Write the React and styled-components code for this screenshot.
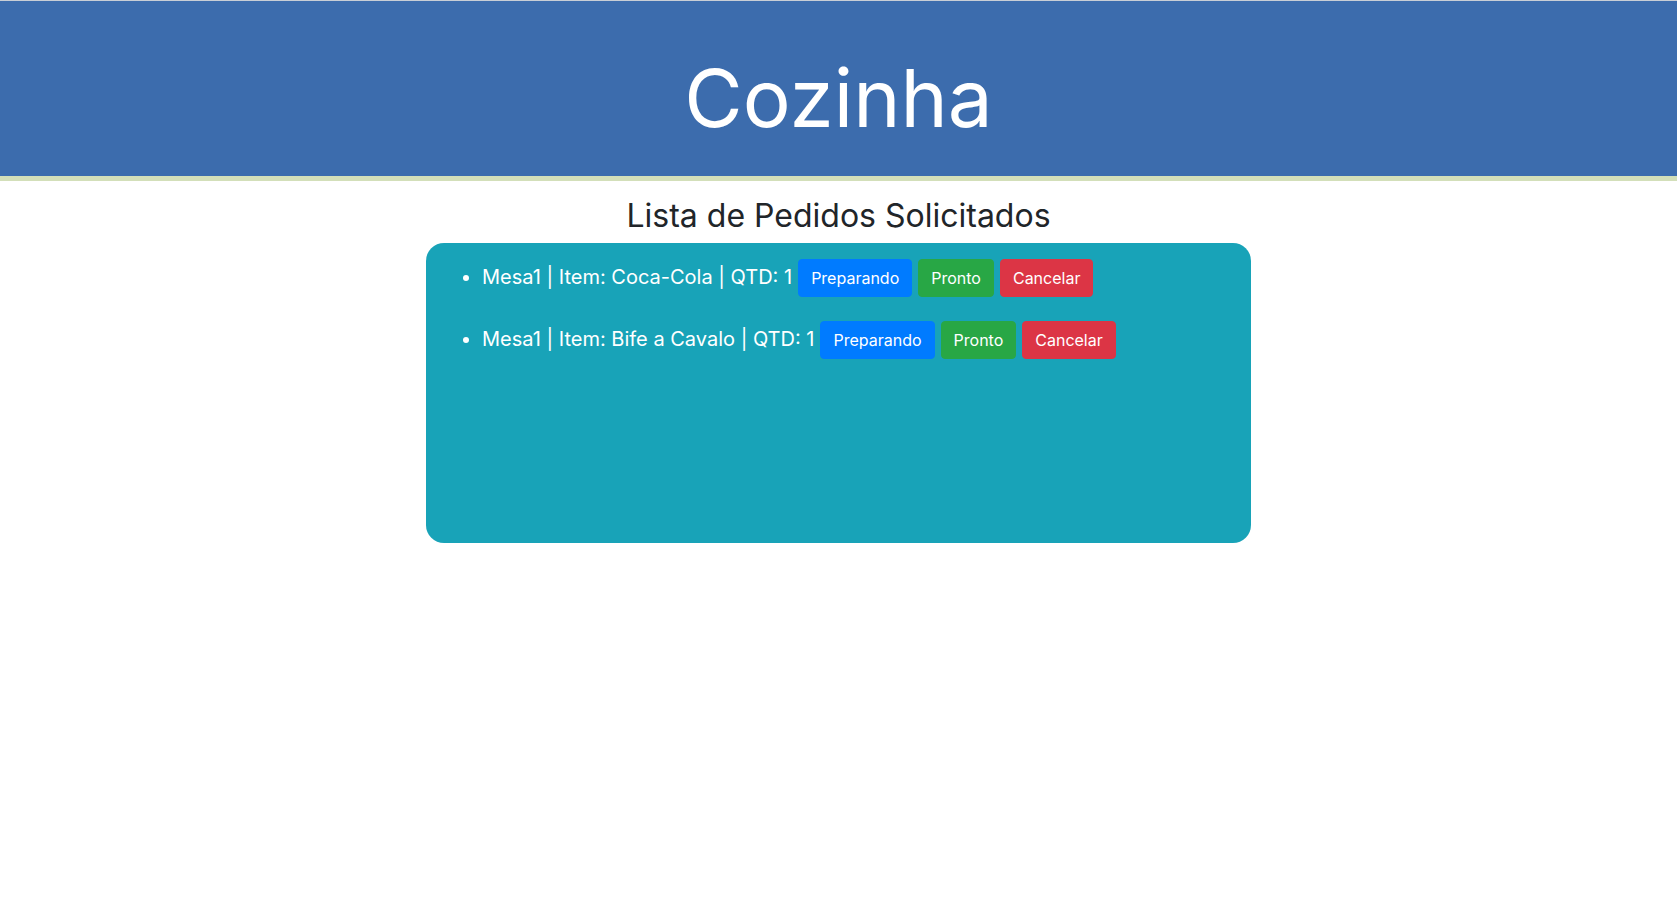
import React from 'react'
import styled, { createGlobalStyle } from 'styled-components'

const GlobalStyle = createGlobalStyle`
  body {
    margin: 0;
    font-family: Inter, "Noto Sans", sans-serif;
    color: #212529;
    background: #fff;
  }
`

const pedidos = [
  { id: 1, mesa: 'Mesa1', item: 'Coca-Cola', qtd: 1 },
  { id: 2, mesa: 'Mesa1', item: 'Bife a Cavalo', qtd: 1 },
]

const Cozinha = () => {
  return (
    <>
      <GlobalStyle />
      <Header>
        <h1>Cozinha</h1>
      </Header>
      <Main>
        <h2>Lista de Pedidos Solicitados</h2>
        <ListBox>
          <ul>
            {pedidos.map((p) => (
              <li key={p.id}>
                {p.mesa} | Item: {p.item} | QTD: {p.qtd}
                <Button variant="primary">Preparando</Button>
                <Button variant="success">Pronto</Button>
                <Button variant="danger">Cancelar</Button>
              </li>
            ))}
          </ul>
        </ListBox>
      </Main>
    </>
  )
}

export default Cozinha

const colors = {
  primary: '#007bff',
  success: '#28a745',
  danger: '#dc3545',
}

const Header = styled.header`
  background-color: #3c6cad;
  border-top: 1px solid #c9ced6;
  border-bottom: 5px solid #d3dfb9;
  padding: 48px 0 30px;
  text-align: center;

  h1 {
    margin: 0;
    font-size: 80px;
    font-weight: 400;
    line-height: normal;
    color: #fff;
  }
`

const Main = styled.main`
  display: flex;
  flex-direction: column;
  align-items: center;

  h2 {
    margin: 15px 0 8px;
    font-size: 32px;
    font-weight: 400;
    line-height: normal;
    color: #212529;
  }
`

const ListBox = styled.div`
  width: 825px;
  height: 300px;
  box-sizing: border-box;
  background-color: #18a3b8;
  border-radius: 18px;
  padding: 16px;

  ul {
    margin: 0;
    padding-left: 40px;
  }

  li {
    color: #fff;
    font-size: 20px;
    line-height: 1.5;
    margin-bottom: 24px;
  }
`

const Button = styled.button`
  display: inline-block;
  margin-left: 6px;
  padding: 6px 12px;
  font-family: inherit;
  font-size: 16px;
  line-height: 1.5;
  color: #fff;
  background-color: ${(p) => colors[p.variant]};
  border: 1px solid ${(p) => colors[p.variant]};
  border-radius: 4px;
  cursor: pointer;
  vertical-align: baseline;
`
